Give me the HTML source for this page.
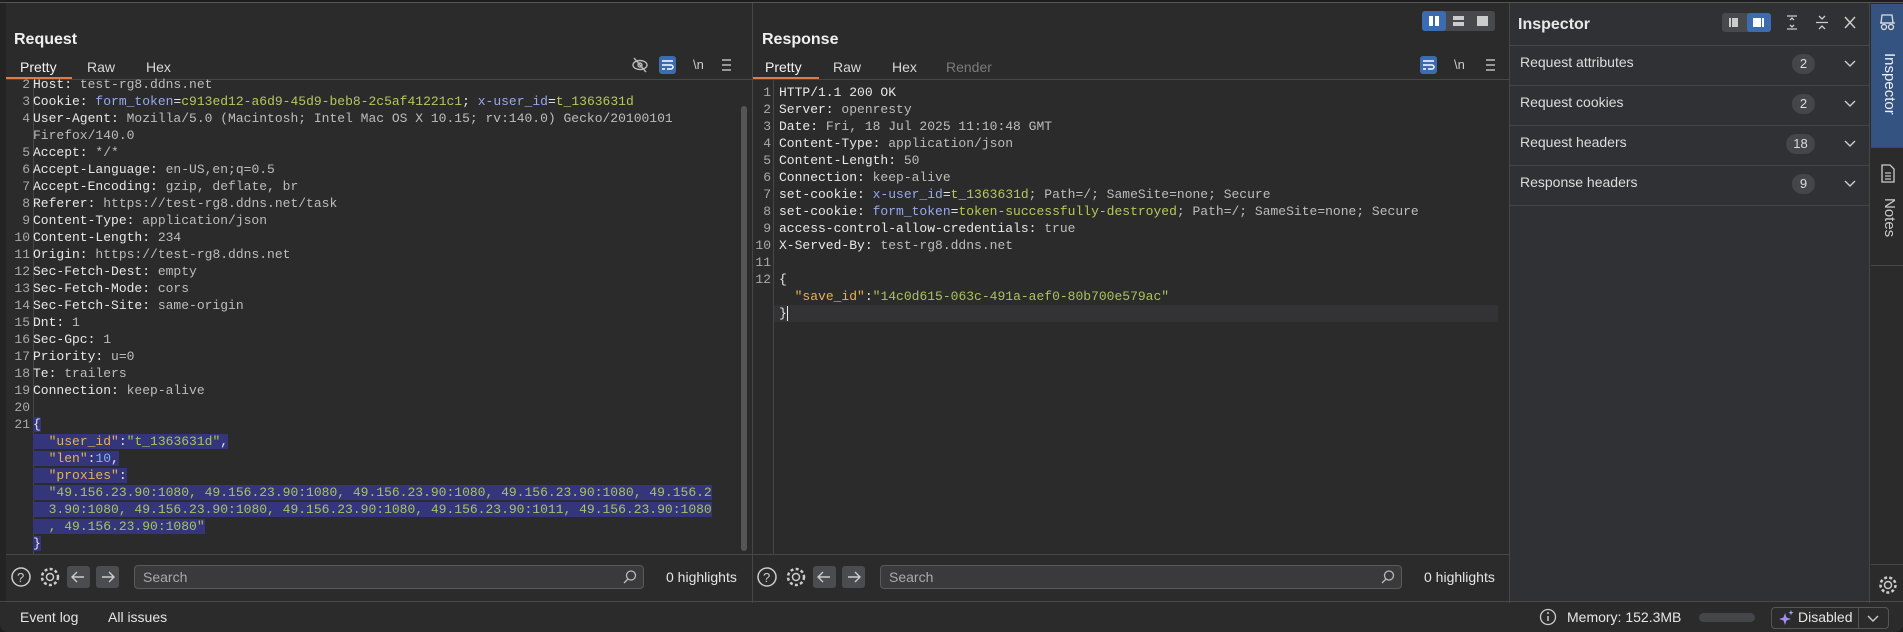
<!DOCTYPE html>
<html><head><meta charset="utf-8"><style>
*{box-sizing:border-box;margin:0;padding:0}
body{width:1903px;height:632px;background:#1e1e1e;overflow:hidden;position:relative;font-family:"Liberation Sans",sans-serif;color:#ddd}
.a{position:absolute}
.app{position:absolute;left:0;top:2px;width:1903px;height:630px;background:#2b2b2b;border-top:1px solid #555;border-radius:0 0 8px 8px;overflow:hidden}
.t{font-size:14px;color:#e6e6e6;white-space:nowrap}
.title{font-size:16px;font-weight:bold;color:#f0f0f0}
.tab{font-size:14px;color:#d8d8d8}
.code{font-family:"Liberation Mono",monospace;font-size:13px;white-space:pre;line-height:17px;color:#e8e8e8}
.ln{font-family:"Liberation Mono",monospace;font-size:13px;line-height:17px;color:#aaa;text-align:right;white-space:pre}
.v{color:#bdbdbd}.ck{color:#96a9ee}.cv{color:#b7c85a}.jk{color:#e4b54c}.jn{color:#7ab6f5}.js{color:#a9c35e}
.sel{background:#34357a}
.badge{background:#444649;border-radius:10px;font-size:13px;color:#ddd;text-align:center;line-height:20px;height:20px}
.row{position:absolute;left:1510px;width:360px;height:40px;border-bottom:1px solid #444}
.row span.l{position:absolute;left:10px;top:11px;font-size:14px;color:#ddd}
</style></head><body>
<div class="app">
<div class="a" style="left:0;top:0;width:6px;height:600px;background:#242424"></div>
<div class="a" style="left:752px;top:0;width:1px;height:600px;background:#474747"></div>
<div class="a" style="left:1509px;top:0;width:1px;height:600px;background:#474747"></div>
<div class="a" style="left:1510px;top:0;width:360px;height:598px;background:#303134"></div>
<div class="a" style="left:1869px;top:0;width:1px;height:600px;background:#474747"></div>
<div class="a" style="left:1870px;top:0;width:33px;height:600px;background:#2b2b2b"></div>
<div class="a" style="left:0;top:598px;width:1903px;height:1px;background:#4a4a4a"></div>

<div class="a title" style="left:14px;top:28px">Request</div>
<div class="a tab" style="left:20px;top:56px;color:#f2f2f2">Pretty</div>
<div class="a tab" style="left:87px;top:56px">Raw</div>
<div class="a tab" style="left:146px;top:56px">Hex</div>
<div class="a" style="left:6px;top:74px;width:66px;height:3px;background:#e07a46"></div>
<div class="a" style="left:6px;top:76px;width:746px;height:1px;background:#474747"></div>
<svg class="a" style="left:630px;top:52px" width="110" height="20"><g stroke="#bbb" fill="none" stroke-width="1.4"><ellipse cx="10" cy="10" rx="7" ry="4.5"/><circle cx="10" cy="10" r="2"/><line x1="4" y1="3" x2="16" y2="17"/></g><rect x="29" y="1" width="17" height="18" rx="3" fill="#3d6bb0"/><g stroke="#fff" stroke-width="1.4" fill="none"><line x1="32" y1="6" x2="43" y2="6"/><path d="M32 10h9a2 2 0 0 1 0 4h-4"/><line x1="32" y1="14" x2="35" y2="14"/></g><text x="63" y="14" fill="#ccc" font-size="13" font-family="Liberation Sans">\n</text><g stroke="#bbb" stroke-width="1.4"><line x1="92" y1="5" x2="101" y2="5"/><line x1="92" y1="10" x2="101" y2="10"/><line x1="92" y1="15" x2="101" y2="15"/></g></svg>

<div class="a" style="left:33px;top:76px;width:1px;height:475px;background:#474747"></div>
<div class="a ln" style="left:6px;top:73px;width:24px">2
3
4

5
6
7
8
9
10
11
12
13
14
15
16
17
18
19
20
21</div>
<div class="a code" style="left:33px;top:73px">Host: <span class="v">test-rg8.ddns.net</span>
Cookie: <span class="ck">form_token</span>=<span class="cv">c913ed12-a6d9-45d9-beb8-2c5af41221c1</span>; <span class="ck">x-user_id</span>=<span class="cv">t_1363631d</span>
User-Agent: <span class="v">Mozilla/5.0 (Macintosh; Intel Mac OS X 10.15; rv:140.0) Gecko/20100101</span>
<span class="v">Firefox/140.0</span>
Accept: <span class="v">*/*</span>
Accept-Language: <span class="v">en-US,en;q=0.5</span>
Accept-Encoding: <span class="v">gzip, deflate, br</span>
Referer: <span class="v">https://test-rg8.ddns.net/task</span>
Content-Type: <span class="v">application/json</span>
Content-Length: <span class="v">234</span>
Origin: <span class="v">https://test-rg8.ddns.net</span>
Sec-Fetch-Dest: <span class="v">empty</span>
Sec-Fetch-Mode: <span class="v">cors</span>
Sec-Fetch-Site: <span class="v">same-origin</span>
Dnt: <span class="v">1</span>
Sec-Gpc: <span class="v">1</span>
Priority: <span class="v">u=0</span>
Te: <span class="v">trailers</span>
Connection: <span class="v">keep-alive</span>

<span class="sel">{</span>
<span class="sel">  <span class="jk">"user_id"</span>:<span class="js">"t_1363631d"</span>,</span>
<span class="sel">  <span class="jk">"len"</span>:<span class="jn">10</span>,</span>
<span class="sel">  <span class="jk">"proxies"</span>:</span>
<span class="sel">  <span class="js">"49.156.23.90:1080, 49.156.23.90:1080, 49.156.23.90:1080, 49.156.23.90:1080, 49.156.2</span></span>
<span class="sel">  <span class="js">3.90:1080, 49.156.23.90:1080, 49.156.23.90:1080, 49.156.23.90:1011, 49.156.23.90:1080</span></span>
<span class="sel">  <span class="js">, 49.156.23.90:1080"</span></span>
<span class="sel">}</span></div>
<div class="a" style="left:741px;top:103px;width:6px;height:445px;background:#555;border-radius:3px"></div>

<div class="a" style="left:6px;top:551px;width:746px;height:1px;background:#474747"></div>
<svg class="a" style="left:10px;top:562px" width="120" height="24"><circle cx="11" cy="12" r="9" stroke="#ccc" stroke-width="1.5" fill="none"/><text x="7" y="17" fill="#ccc" font-size="13" font-family="Liberation Sans">?</text><circle cx="40" cy="12" r="3.5" stroke="#ccc" stroke-width="1.5" fill="none"/><circle cx="40" cy="12" r="8" stroke="#ccc" stroke-width="2.5" fill="none" stroke-dasharray="3 2.3"/><rect x="57" y="1" width="23" height="22" rx="3" fill="#4a4c4f"/><path d="M74 12H63M67 7l-5 5 5 5" stroke="#ccc" stroke-width="1.4" fill="none"/><rect x="86" y="1" width="23" height="22" rx="3" fill="#4a4c4f"/><path d="M92 12h11M99 7l5 5-5 5" stroke="#ccc" stroke-width="1.4" fill="none"/></svg>
<div class="a" style="left:134px;top:562px;width:510px;height:24px;border:1px solid #5a5a5a;border-radius:4px;background:#3a3a3c"></div>
<div class="a t" style="left:143px;top:566px;color:#aaa">Search</div>
<svg class="a" style="left:622px;top:566px" width="16" height="16"><circle cx="9" cy="6.5" r="4.5" stroke="#bbb" stroke-width="1.3" fill="none"/><line x1="6" y1="10" x2="2" y2="14" stroke="#bbb" stroke-width="1.3"/></svg>
<div class="a t" style="left:666px;top:566px">0 highlights</div>

<svg class="a" style="left:1422px;top:8px" width="73" height="20"><rect width="73" height="20" rx="3" fill="#47494c"/><rect width="24" height="20" rx="3" fill="#3d6bb0"/><rect x="7" y="5" width="4" height="10" fill="#fff"/><rect x="13" y="5" width="4" height="10" fill="#fff"/><rect x="31" y="5" width="11" height="4" fill="#ccc"/><rect x="31" y="11" width="11" height="4" fill="#ccc"/><rect x="55" y="5" width="11" height="10" fill="#ccc"/></svg>
<div class="a title" style="left:762px;top:28px">Response</div>
<div class="a tab" style="left:765px;top:56px;color:#f2f2f2">Pretty</div>
<div class="a tab" style="left:833px;top:56px">Raw</div>
<div class="a tab" style="left:892px;top:56px">Hex</div>
<div class="a tab" style="left:946px;top:56px;color:#7a7a7a">Render</div>
<div class="a" style="left:753px;top:74px;width:66px;height:3px;background:#e07a46"></div>
<div class="a" style="left:753px;top:76px;width:756px;height:1px;background:#474747"></div>
<svg class="a" style="left:1420px;top:52px" width="85" height="20"><rect x="0" y="1" width="17" height="18" rx="3" fill="#3d6bb0"/><g stroke="#fff" stroke-width="1.4" fill="none"><line x1="3" y1="6" x2="14" y2="6"/><path d="M3 10h9a2 2 0 0 1 0 4h-4"/><line x1="3" y1="14" x2="6" y2="14"/></g><text x="34" y="14" fill="#ccc" font-size="13" font-family="Liberation Sans">\n</text><g stroke="#bbb" stroke-width="1.4"><line x1="66" y1="5" x2="75" y2="5"/><line x1="66" y1="10" x2="75" y2="10"/><line x1="66" y1="15" x2="75" y2="15"/></g></svg>

<div class="a" style="left:773px;top:77px;width:1px;height:474px;background:#474747"></div>
<div class="a" style="left:774px;top:302px;width:724px;height:17px;background:#333335"></div>
<div class="a ln" style="left:753px;top:81px;width:18px">1
2
3
4
5
6
7
8
9
10
11
12</div>
<div class="a code" style="left:779px;top:81px">HTTP/1.1 200 OK
Server: <span class="v">openresty</span>
Date: <span class="v">Fri, 18 Jul 2025 11:10:48 GMT</span>
Content-Type: <span class="v">application/json</span>
Content-Length: <span class="v">50</span>
Connection: <span class="v">keep-alive</span>
set-cookie: <span class="ck">x-user_id</span>=<span class="cv">t_1363631d</span><span class="v">; Path=/; SameSite=none; Secure</span>
set-cookie: <span class="ck">form_token</span>=<span class="cv">token-successfully-destroyed</span><span class="v">; Path=/; SameSite=none; Secure</span>
access-control-allow-credentials: <span class="v">true</span>
X-Served-By: <span class="v">test-rg8.ddns.net</span>

{
  <span class="jk">"save_id"</span>:<span class="js">"14c0d615-063c-491a-aef0-80b700e579ac"</span>
}</div>
<div class="a" style="left:787px;top:303px;width:1px;height:15px;background:#eee"></div>

<div class="a" style="left:753px;top:551px;width:756px;height:1px;background:#474747"></div>
<svg class="a" style="left:756px;top:562px" width="120" height="24"><circle cx="11" cy="12" r="9" stroke="#ccc" stroke-width="1.5" fill="none"/><text x="7" y="17" fill="#ccc" font-size="13" font-family="Liberation Sans">?</text><circle cx="40" cy="12" r="3.5" stroke="#ccc" stroke-width="1.5" fill="none"/><circle cx="40" cy="12" r="8" stroke="#ccc" stroke-width="2.5" fill="none" stroke-dasharray="3 2.3"/><rect x="57" y="1" width="23" height="22" rx="3" fill="#4a4c4f"/><path d="M74 12H63M67 7l-5 5 5 5" stroke="#ccc" stroke-width="1.4" fill="none"/><rect x="86" y="1" width="23" height="22" rx="3" fill="#4a4c4f"/><path d="M92 12h11M99 7l5 5-5 5" stroke="#ccc" stroke-width="1.4" fill="none"/></svg>
<div class="a" style="left:880px;top:562px;width:522px;height:24px;border:1px solid #5a5a5a;border-radius:4px;background:#3a3a3c"></div>
<div class="a t" style="left:889px;top:566px;color:#aaa">Search</div>
<svg class="a" style="left:1380px;top:566px" width="16" height="16"><circle cx="9" cy="6.5" r="4.5" stroke="#bbb" stroke-width="1.3" fill="none"/><line x1="6" y1="10" x2="2" y2="14" stroke="#bbb" stroke-width="1.3"/></svg>
<div class="a t" style="left:1424px;top:566px">0 highlights</div>

<div class="a" style="left:1518px;top:13px;font-size:16px;font-weight:bold;color:#e8e8e8">Inspector</div>
<svg class="a" style="left:1722px;top:10px" width="145" height="20"><rect width="49" height="19" rx="3" fill="#47494c"/><rect x="25" width="24" height="19" rx="3" fill="#3d6bb0"/><rect x="7" y="5" width="2" height="9" fill="#ccc"/><rect x="10" y="5" width="6" height="9" fill="#ccc"/><rect x="31" y="5" width="8" height="9" fill="#fff"/><rect x="40" y="5" width="2" height="9" fill="#fff"/><g stroke="#ccc" stroke-width="1.3" fill="none"><line x1="65" y1="3" x2="75" y2="3"/><line x1="65" y1="16" x2="75" y2="16"/><path d="M68 7l2-2 2 2M68 12l2 2 2-2"/><line x1="94" y1="9.5" x2="106" y2="9.5"/><path d="M97 3l3 3 3-3M97 16l3-3 3 3"/><path d="M123 4l10 11M133 4l-10 11" stroke-width="1.5"/></g></svg>
<div class="a" style="left:1510px;top:42px;width:360px;height:1px;background:#474747"></div>
<div class="row" style="top:43px"><span class="l" style="top:8px">Request attributes</span><div class="a badge" style="left:282px;top:8px;width:23px">2</div></div>
<div class="row" style="top:83px"><span class="l" style="top:8px">Request cookies</span><div class="a badge" style="left:282px;top:8px;width:23px">2</div></div>
<div class="row" style="top:123px"><span class="l" style="top:8px">Request headers</span><div class="a badge" style="left:276px;top:8px;width:29px">18</div></div>
<div class="row" style="top:163px"><span class="l" style="top:8px">Response headers</span><div class="a badge" style="left:282px;top:8px;width:23px">9</div></div>
<svg class="a" style="left:1842px;top:53px" width="16" height="160"><g stroke="#ccc" stroke-width="1.4" fill="none"><path d="M3 5l5 5 5-5"/><path d="M3 45l5 5 5-5"/><path d="M3 85l5 5 5-5"/><path d="M3 125l5 5 5-5"/></g></svg>

<div class="a" style="left:1871px;top:1px;width:32px;height:143px;background:#345380"></div>
<svg class="a" style="left:1879px;top:10px" width="18" height="20"><g stroke="#ddd" stroke-width="1.3" fill="none"><path d="M3 2h10l1 8H2z"/><line x1="1" y1="10" x2="16" y2="10"/><circle cx="5" cy="14" r="2.5"/><circle cx="12" cy="14" r="2.5"/></g></svg>
<div class="a" style="left:1898px;top:50px;transform:rotate(90deg);transform-origin:0 0;font-size:15px;color:#f0f0f0;white-space:nowrap">Inspector</div>
<div class="a" style="left:1871px;top:144px;width:32px;height:1px;background:#474747"></div>
<svg class="a" style="left:1880px;top:161px" width="16" height="20"><path d="M2 1h8l4 4v13H2z" stroke="#ccc" stroke-width="1.3" fill="none"/><g stroke="#ccc" stroke-width="1.2"><line x1="5" y1="9" x2="11" y2="9"/><line x1="5" y1="12" x2="11" y2="12"/><line x1="5" y1="15" x2="11" y2="15"/></g></svg>
<div class="a" style="left:1898px;top:195px;transform:rotate(90deg);transform-origin:0 0;font-size:15px;color:#ccc;white-space:nowrap">Notes</div>
<div class="a" style="left:1871px;top:262px;width:32px;height:1px;background:#474747"></div>
<div class="a" style="left:1871px;top:561px;width:32px;height:1px;background:#474747"></div>
<svg class="a" style="left:1878px;top:572px" width="20" height="20"><circle cx="10" cy="10" r="3.5" stroke="#ccc" stroke-width="1.5" fill="none"/><circle cx="10" cy="10" r="7.5" stroke="#ccc" stroke-width="2.5" fill="none" stroke-dasharray="3 2.2"/></svg>

<div class="a t" style="left:20px;top:606px">Event log</div>
<div class="a t" style="left:108px;top:606px">All issues</div>
<svg class="a" style="left:1539px;top:605px" width="18" height="18"><circle cx="9" cy="9" r="7.5" stroke="#ccc" stroke-width="1.3" fill="none"/><line x1="9" y1="8" x2="9" y2="13" stroke="#ccc" stroke-width="1.5"/><circle cx="9" cy="5" r="1" fill="#ccc"/></svg>
<div class="a t" style="left:1567px;top:606px">Memory: 152.3MB</div>
<div class="a" style="left:1699px;top:610px;width:56px;height:9px;border-radius:5px;background:#444649"></div>
<div class="a" style="left:1771px;top:604px;width:118px;height:22px;border:1px solid #555;border-radius:4px"></div>
<div class="a" style="left:1858px;top:605px;width:1px;height:20px;background:#555"></div>
<svg class="a" style="left:1777px;top:606px" width="18" height="18"><path d="M8 4l1.5 4.5L14 10l-4.5 1.5L8 16l-1.5-4.5L2 10l4.5-1.5z" fill="#a58cf0"/><path d="M14 1l.7 2 2 .7-2 .7-.7 2-.7-2-2-.7 2-.7z" fill="#8fb4f5"/></svg>
<div class="a t" style="left:1798px;top:606px">Disabled</div>
<svg class="a" style="left:1866px;top:609px" width="14" height="12"><path d="M2 4l5 5 5-5" stroke="#ccc" stroke-width="1.4" fill="none"/></svg>
</div>
</body></html>
